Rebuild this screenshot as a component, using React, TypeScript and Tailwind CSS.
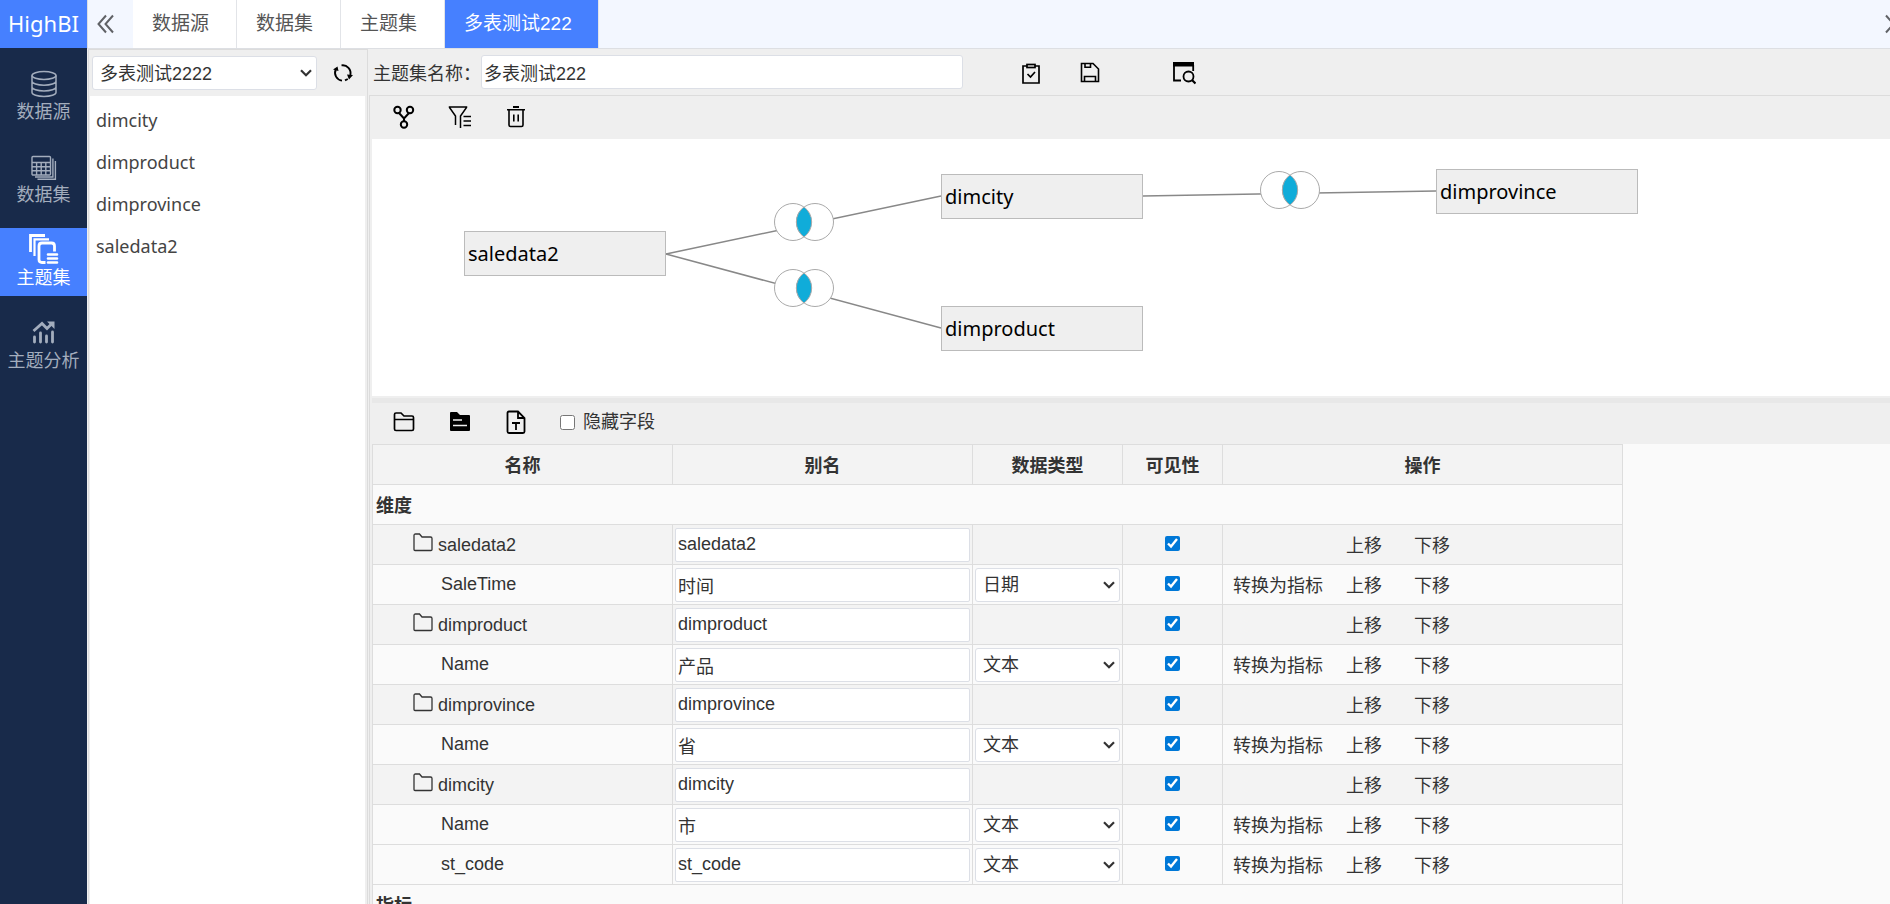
import type { ReactNode } from "react";
import clsx from "clsx";

type Row = {
  name: string;
  alias: string;
  folder?: boolean;
  type?: string;
};

const tabs = ["数据源", "数据集", "主题集", "多表测试222"];

const tables = ["dimcity", "dimproduct", "dimprovince", "saledata2"];

const rows: Row[] = [
  { name: "saledata2", alias: "saledata2", folder: true },
  { name: "SaleTime", alias: "时间", type: "日期" },
  { name: "dimproduct", alias: "dimproduct", folder: true },
  { name: "Name", alias: "产品", type: "文本" },
  { name: "dimprovince", alias: "dimprovince", folder: true },
  { name: "Name", alias: "省", type: "文本" },
  { name: "dimcity", alias: "dimcity", folder: true },
  { name: "Name", alias: "市", type: "文本" },
  { name: "st_code", alias: "st_code", type: "文本" },
];

/* node and join positions on the canvas */
const nodes = [
  { name: "saledata2", x: 92, y: 92 },
  { name: "dimcity", x: 569, y: 35 },
  { name: "dimproduct", x: 569, y: 167 },
  { name: "dimprovince", x: 1064, y: 30 },
];

const links = [
  { x1: 294, y1: 115, x2: 569, y2: 57, jx: 432, jy: 83 },
  { x1: 294, y1: 115, x2: 569, y2: 189, jx: 432, jy: 149 },
  { x1: 771, y1: 57, x2: 1064, y2: 52, jx: 918, jy: 51 },
];

/* ================= ICONS ================= */

function Svg({ size = 24, width = 1.6, children }: { size?: number; width?: number; children: ReactNode }) {
  return (
    <svg
      width={size}
      height={size}
      viewBox={`0 0 ${size} ${size}`}
      fill="none"
      stroke="currentColor"
      strokeWidth={width}
      className="shrink-0"
      aria-hidden="true"
    >
      {children}
    </svg>
  );
}

const DatabaseIcon = () => (
  <Svg size={30} width={1.5}>
    <ellipse cx="15" cy="7.5" rx="12" ry="4" />
    <path d="M3 7.5v17c0 2.2 5.4 4 12 4s12-1.8 12-4v-17M3 13.2c0 2.2 5.4 4 12 4s12-1.8 12-4M3 18.9c0 2.2 5.4 4 12 4s12-1.8 12-4" />
  </Svg>
);

const DatasetIcon = () => (
  <Svg size={30} width={1.4}>
    <rect x="3" y="5.5" width="18.5" height="18.5" rx="1" />
    <path d="M3 11.5h18M3 15.7h18M3 19.8h18M7.6 11.5V24M12.2 11.5V24M16.8 11.5V24M23.9 7.5V26H6M26.4 10v18.3H8.500" />
  </Svg>
);

const SubjectIcon = () => (
  <Svg size={30} width={2.8}>
    <path d="M1.500 18V1.500H16" />
    <path d="M5.500 22V5.300H20" strokeWidth="2.200" />
    <path d="M25.500 17.500V12q0-3-3-3H13q-3 0-3 3v13.500q0 3 3 3h3.500" />
    <path d="M19 20.500h9M19 24.500h9M19 28.500h9" strokeLinecap="round" strokeWidth="2.600" />
  </Svg>
);

const AnalysisIcon = () => (
  <Svg size={30} width={2.8}>
    <path d="M5.500 25v-5M11.500 25V16M17.500 25v-6M23.500 25V15" strokeLinecap="round" />
    <path d="M4.500 14l8.500-7.500 5 5 5-5" />
    <path d="M18 4.500h7.500V12z" fill="currentColor" stroke="none" />
  </Svg>
);

const RefreshIcon = () => (
  <Svg size={20} width={1.9}>
    <path d="M9 17.600A7.800 7.800 0 0 1 2.800 6.500" />
    <path d="M8.500 2.400A7.800 7.800 0 0 1 17.300 12" />
    <path d="M12 17.400l2.800-1.400" />
    <path d="M0 6.500l4.500-3 1 4.500zM14 11.500l6 .5-4 4.500z" fill="currentColor" stroke="none" />
  </Svg>
);

const CheckBoardIcon = () => (
  <Svg size={22} width={1.7}>
    <path d="M7 4H3v17h16V4h-4" />
    <rect x="7" y="2.500" width="8" height="3" />
    <path d="M7.500 12l3 3 4.500-5" />
  </Svg>
);

const SaveIcon = () => (
  <Svg size={22} width={1.6}>
    <path d="M2.500 1.500H14l5.500 5.500v12.500h-17z" />
    <path d="M6 1.500v3.700h5.500V1.500M5.500 19.500v-5h11v5" />
  </Svg>
);

const PreviewIcon = () => (
  <Svg size={24} width={1.8}>
    <path d="M1 1h21v4.500H1z" fill="currentColor" stroke="none" />
    <path d="M9 19.500H2V4M21.200 4v6" />
    <circle cx="16.500" cy="15.500" r="5" />
    <path d="M20 19l3.500 3.500" strokeWidth="2.200" />
  </Svg>
);

const JoinIcon = () => (
  <Svg size={24} width={2}>
    <circle cx="5.500" cy="5" r="3.200" />
    <circle cx="18" cy="5" r="3.200" />
    <circle cx="12" cy="19.500" r="3.200" />
    <path d="M7 8l5 5.500 5-5.500M12 13v3.500" />
  </Svg>
);

const FilterIcon = () => (
  <Svg size={24} width={1.5}>
    <path d="M7.500 20V11L1.500 2.500V2h17v.5L12.500 11v12" />
    <path d="M15.500 11.500H23M15.500 16H23M15.500 20.500H23" />
  </Svg>
);

const TrashIcon = () => (
  <Svg size={24} width={1.6}>
    <path d="M9 2h6" strokeWidth="2" />
    <path d="M3 4.800h18M5 4.800V20q0 1.500 1.500 1.500h11q1.500 0 1.500-1.500V4.800M9.800 9.500v7M14.200 9.500v7" />
  </Svg>
);

const FolderIcon = () => (
  <Svg size={24} width={1.7}>
    <path d="M2.500 19V4.500q0-1.500 1.500-1.500h5l3 3h8q1.500 0 1.500 1.500V19q0 1.500-1.500 1.500H4q-1.500 0-1.500-1.500zM2.500 9.500h19" />
  </Svg>
);

const FolderSolidIcon = () => (
  <Svg size={24}>
    <path d="M2 3q0-1 1-1h6l3 3h9q1 0 1 1v14q0 1-1 1H3q-1 0-1-1z" fill="currentColor" stroke="none" />
    <path d="M5 10h9M5 15.500h14" stroke="#efefef" />
  </Svg>
);

const FileTextIcon = () => (
  <Svg size={24} width={1.8}>
    <path d="M14 1.500H5Q3.500 1.500 3.500 3v18.500Q3.500 23 5 23h14q1.500 0 1.500-1.500V8zV8h6.500" />
    <path d="M8 13h8M12 13v7" />
  </Svg>
);

const RowFolderIcon = () => (
  <Svg size={20} width={1.3}>
    <path d="M1 16.500v-14Q1 1 2.500 1h4l2.500 3h8.500Q19 4 19 5.500v11q0 1-1 1H2q-1 0-1-1z" />
  </Svg>
);

function DoubleChevron({ flip }: { flip?: boolean }) {
  return (
    <svg
      width="17"
      height="20"
      viewBox="0 0 17 20"
      fill="none"
      stroke="#606266"
      strokeWidth="2"
      className={clsx("shrink-0", flip && "rotate-180")}
      aria-hidden="true"
    >
      <path d="M9 1.500L1.500 10 9 18.500M16 1.500L8.500 10l7.500 8.500" />
    </svg>
  );
}

/* ================= PARTS ================= */

const menu = [
  { label: "数据源", icon: <DatabaseIcon /> },
  { label: "数据集", icon: <DatasetIcon /> },
  { label: "主题集", icon: <SubjectIcon />, active: true },
  { label: "主题分析", icon: <AnalysisIcon /> },
];

function IconButton({ label, children }: { label: string; children: ReactNode }) {
  return (
    <button type="button" aria-label={label} className="flex size-6 items-center justify-center text-black">
      {children}
    </button>
  );
}

function Select({ label, value, className }: { label: string; value: string; className?: string }) {
  return (
    <div className={clsx("relative", className)}>
      <select
        aria-label={label}
        className="h-[34px] w-full appearance-none rounded-[3px] border border-[#dcdfe6] bg-white pt-px pl-[7px] text-[#333]"
      >
        <option>{value}</option>
      </select>
      <svg
        width="12"
        height="8"
        viewBox="0 0 12 8"
        fill="none"
        stroke="#333"
        strokeWidth="2.2"
        className="pointer-events-none absolute top-[13px] right-[5px]"
        aria-hidden="true"
      >
        <path d="M1 1.200l5 5 5-5" />
      </svg>
    </div>
  );
}

function Sidebar() {
  return (
    <aside className="flex w-[87px] shrink-0 flex-col bg-[#182a4a]">
      <div className="flex h-12 items-center justify-center bg-[#4680ff] pb-[2px] font-['Noto_Sans',sans-serif] text-[22px] text-white">
        HighBI
      </div>
      <nav className="mt-[14px] flex flex-col gap-[15px]">
        {menu.map((item) => (
          <a
            key={item.label}
            href="#"
            className={clsx(
              "flex h-[68px] flex-col items-center gap-[2px] pt-[6px] leading-6",
              item.active ? "bg-[#4680ff] text-white" : "text-[#a3adbd]"
            )}
          >
            {item.icon}
            {item.label}
          </a>
        ))}
      </nav>
    </aside>
  );
}

function TabBar() {
  return (
    <div className="flex h-[49px] shrink-0 border-b border-l border-[#dddfe3] bg-[#f3f7ff]">
      <button type="button" aria-label="向左" className="flex w-[45px] items-center pl-[9px]">
        <DoubleChevron />
      </button>
      {tabs.map((tab, i) => (
        <button
          key={tab}
          type="button"
          className={clsx(
            "border-r border-[#e2e4e8] pr-[26px] pl-[19px] text-[19px] first-of-type:pl-5",
            i === tabs.length - 1 ? "bg-[#4680ff] text-white" : "bg-white pr-[27px] text-[#555]"
          )}
        >
          {tab}
        </button>
      ))}
      <button type="button" aria-label="向右" className="ml-auto flex w-[5px] items-center overflow-hidden">
        <DoubleChevron flip />
      </button>
    </div>
  );
}

function TablePanel() {
  return (
    <div className="flex w-[280px] shrink-0 flex-col border-x border-t border-[#dcdcdc] bg-[#efefef] px-px">
      <div className="flex h-[46px] shrink-0 items-center gap-[14px] pl-[2px]">
        <Select label="主题集" value="多表测试2222" className="w-[225px]" />
        <IconButton label="刷新">
          <RefreshIcon />
        </IconButton>
      </div>
      <ul className="mr-px flex-1 bg-white pt-[3px] font-['Noto_Sans',sans-serif] text-[#444]">
        {tables.map((t) => (
          <li key={t} className="flex h-[42px] items-center pl-[6px]">
            {t}
          </li>
        ))}
      </ul>
    </div>
  );
}

function Join({ x, y }: { x: number; y: number }) {
  return (
    <g stroke="#aaa">
      <circle cx={x - 11} cy={y} r="18.500" fill="#fff" />
      <circle cx={x + 11} cy={y} r="18.500" fill="#fff" />
      <path
        d={`M${x} ${y - 15}A18.500 18.500 0 0 1 ${x} ${y + 15}A18.500 18.500 0 0 1 ${x} ${y - 15}z`}
        fill="#10acd9"
      />
    </g>
  );
}

function Canvas() {
  return (
    <div className="relative h-[257px] shrink-0 overflow-hidden bg-white">
      <svg className="absolute inset-0 size-full" aria-hidden="true">
        {links.map((l) => (
          <g key={`${l.jx}-${l.jy}`}>
            <line x1={l.x1} y1={l.y1} x2={l.x2} y2={l.y2} stroke="#888" strokeWidth="1.500" />
            <Join x={l.jx} y={l.jy} />
          </g>
        ))}
      </svg>
      {nodes.map((n) => (
        <div
          key={n.name}
          className="absolute flex h-[45px] w-[202px] items-center border border-[#bbb] bg-[#efefef] pl-[3px] font-['Noto_Sans',sans-serif] text-xl text-black"
          style={{ left: n.x, top: n.y }}
        >
          {n.name}
        </div>
      ))}
    </div>
  );
}

function FieldRow({ row }: { row: Row }) {
  return (
    <tr className={clsx("h-10", row.folder ? "bg-[#f3f3f3]" : "bg-[#fafafa]")}>
      <td className="border border-[#ddd] p-0">
        {row.folder ? (
          <div className="flex gap-[5px] pl-10">
            <RowFolderIcon />
            {row.name}
          </div>
        ) : (
          <div className="pb-[2px] pl-[68px]">{row.name}</div>
        )}
      </td>
      <td className="border border-[#ddd] p-0">
        <div className="flex px-[2px]">
          <input
            type="text"
            aria-label={`${row.name} 别名`}
            defaultValue={row.alias}
            className="h-[34px] w-full rounded-[2px] border border-[#dcdfe6] bg-white px-[2px]"
          />
        </div>
      </td>
      <td className="border border-[#ddd] p-0">
        {row.type && <Select label={`${row.name} 数据类型`} value={row.type} className="mx-[2px]" />}
      </td>
      <td className="border border-[#ddd] p-0">
        <div className="flex justify-center pb-[2px]">
          <input
            type="checkbox"
            defaultChecked
            aria-label={`${row.name} 可见性`}
            className="size-[15px] accent-[#0078d7]"
          />
        </div>
      </td>
      <td className="border border-[#ddd] p-0">
        <div className="flex gap-8 pt-[3px] pl-[10px] leading-6">
          <div className="w-[81px] whitespace-nowrap">{row.type && <button type="button">转换为指标</button>}</div>
          <button type="button">上移</button>
          <button type="button">下移</button>
        </div>
      </td>
    </tr>
  );
}

function FieldTable() {
  return (
    <table className="w-[1251px] table-fixed border-collapse text-[#333]">
      <colgroup>
        <col className="w-[300px]" />
        <col className="w-[300px]" />
        <col className="w-[150px]" />
        <col className="w-[100px]" />
        <col className="w-[400px]" />
      </colgroup>
      <thead>
        <tr className="h-10 bg-[#f3f3f3]">
          {["名称", "别名", "数据类型", "可见性", "操作"].map((h) => (
            <th key={h} className="border border-[#ddd] px-0 pt-[2px] pb-0 font-bold">
              {h}
            </th>
          ))}
        </tr>
      </thead>
      <tbody>
        <tr className="h-10 bg-[#fafafa]">
          <th colSpan={5} className="border border-[#ddd] px-[3px] pt-[3px] pb-0 text-left font-bold">
            维度
          </th>
        </tr>
        {rows.map((row, i) => (
          <FieldRow key={i} row={row} />
        ))}
        <tr className="h-10 bg-[#fafafa]">
          <th colSpan={5} className="border border-[#ddd] px-[3px] pt-[3px] pb-0 text-left font-bold">
            指标
          </th>
        </tr>
      </tbody>
    </table>
  );
}

export default function App() {
  return (
    <div className="flex h-screen overflow-hidden bg-[#efefef] font-['Liberation_Sans','Noto_Sans_CJK_SC',sans-serif] text-lg leading-6 text-[#333]">
      <Sidebar />
      <div className="flex min-w-0 flex-1 flex-col">
        <TabBar />
        <div className="flex min-h-0 flex-1 pl-px">
          <TablePanel />
          <main className="flex min-w-0 flex-1 flex-col">
            {/* ================= NAME BAR ================= */}
            <div className="flex h-[46px] shrink-0 items-center pl-[5px]">
              <label htmlFor="subject-name" className="w-[108px] pt-1 whitespace-nowrap">
                主题集名称：
              </label>
              <input
                id="subject-name"
                type="text"
                defaultValue="多表测试222"
                className="h-[34px] w-[482px] rounded-[3px] border border-[#dcdfe6] bg-white px-[2px]"
              />
              <div className="flex items-center pt-px pl-14">
                <IconButton label="校验">
                  <CheckBoardIcon />
                </IconButton>
                <div className="pl-[35px]">
                  <IconButton label="保存">
                    <SaveIcon />
                  </IconButton>
                </div>
                <div className="pl-[70px]">
                  <IconButton label="预览">
                    <PreviewIcon />
                  </IconButton>
                </div>
              </div>
            </div>

            <div className="ml-px flex min-h-0 flex-1 flex-col border-t border-l border-[#dcdcdc] pl-[2px]">
              {/* ================= RELATION CANVAS ================= */}
              <div className="flex h-[43px] shrink-0 items-center gap-8 pb-[2px] pl-5">
                <IconButton label="关联">
                  <JoinIcon />
                </IconButton>
                <IconButton label="过滤">
                  <FilterIcon />
                </IconButton>
                <IconButton label="删除">
                  <TrashIcon />
                </IconButton>
              </div>
              <Canvas />
              <div className="mt-[2px] h-[5px] shrink-0 bg-[#e8e8e8]" />

              {/* ================= FIELDS ================= */}
              <div className="flex h-[41px] shrink-0 items-center gap-8 pb-[3px] pl-5">
                <IconButton label="新建文件夹">
                  <FolderIcon />
                </IconButton>
                <IconButton label="重命名">
                  <FolderSolidIcon />
                </IconButton>
                <IconButton label="计算字段">
                  <FileTextIcon />
                </IconButton>
                <label className="flex items-center gap-2">
                  <input type="checkbox" className="size-[15px]" />
                  隐藏字段
                </label>
              </div>
              <div className="min-h-0 flex-1 overflow-hidden bg-[#fafafa]">
                <FieldTable />
              </div>
            </div>
          </main>
        </div>
      </div>
    </div>
  );
}
